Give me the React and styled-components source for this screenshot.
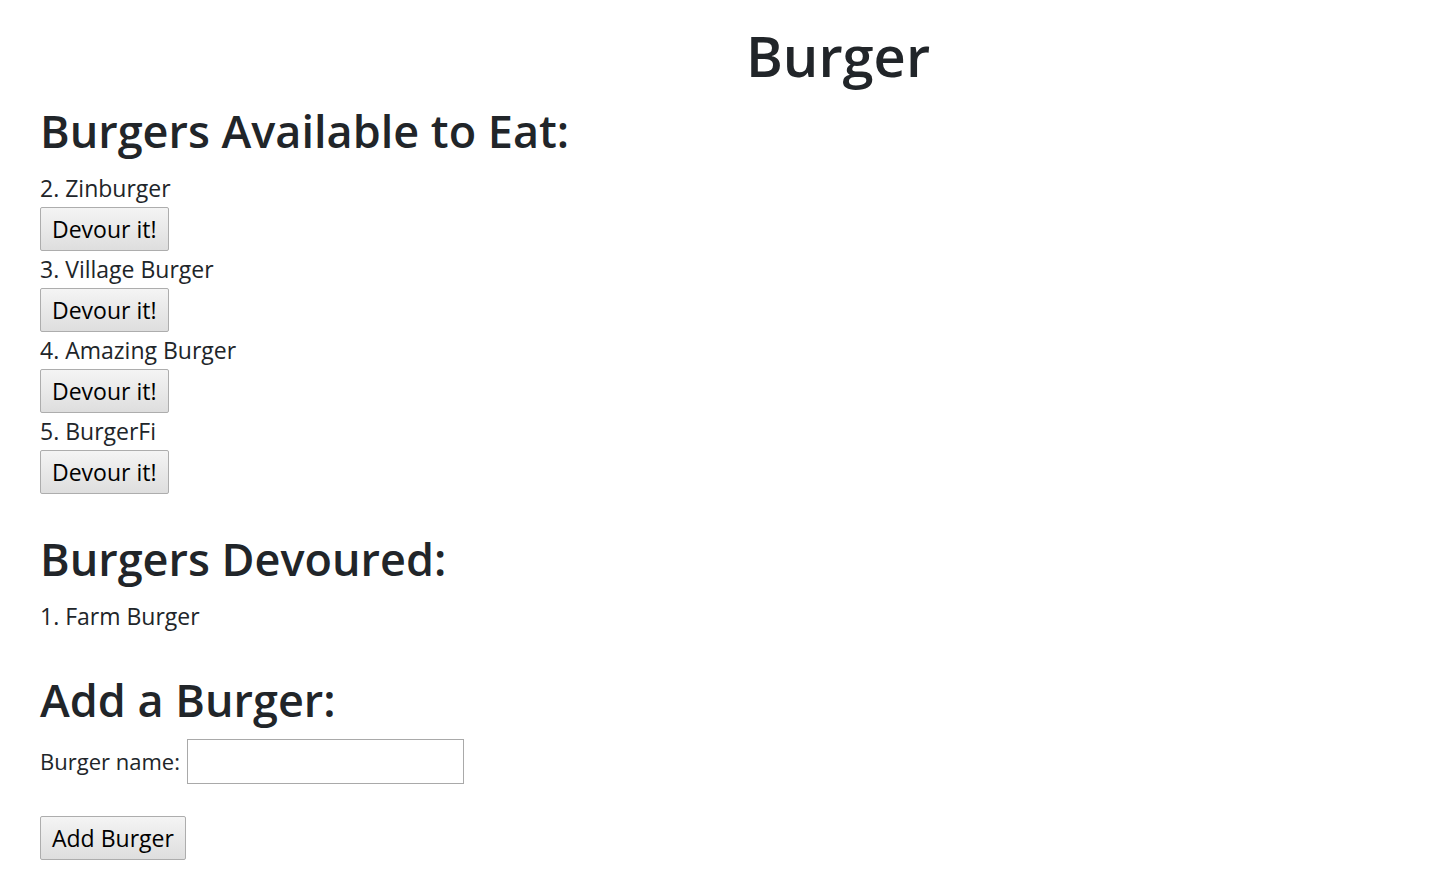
import styled, { createGlobalStyle } from "styled-components";

const GlobalStyle = createGlobalStyle`
  body {
    margin: 0;
    background: #fff;
    color: #212529;
    font-family: "Open Sans", "Noto Sans", sans-serif;
  }
`;

const Page = styled.div`
  padding: 0 40px 20px 40px;
`;

const Title = styled.h1`
  margin: 0;
  padding: 22px 0 0 234px;
  text-align: center;
  font-size: 56px;
  font-weight: 600;
  line-height: 1.2;
`;

const SectionTitle = styled.h2`
  margin: ${(p) => p.$top}px 0 12px 0;
  font-size: 45px;
  font-weight: 600;
  line-height: 1.2;
`;

const List = styled.div`
  display: flex;
  flex-direction: column;
  align-items: flex-start;
`;

const Item = styled.div`
  font-size: 23px;
  line-height: 37px;
`;

const Button = styled.button`
  display: block;
  font-family: inherit;
  font-size: 23px;
  line-height: 36px;
  color: #000;
  padding: 3px 11px;
  border: 1px solid #adadad;
  border-radius: 2px;
  background: linear-gradient(#f4f4f4, #dedede);
`;

const Form = styled.form`
  display: flex;
  flex-direction: column;
  align-items: flex-start;
  gap: 32px;
`;

const Field = styled.label`
  display: flex;
  align-items: center;
  gap: 7px;
  font-size: 22px;
  line-height: 37px;
`;

const Input = styled.input`
  width: 277px;
  height: 45px;
  box-sizing: border-box;
  border: 1px solid #a9a9a9;
  font-family: inherit;
  font-size: 23px;
`;

const burgers = [
  { id: 2, name: "Zinburger" },
  { id: 3, name: "Village Burger" },
  { id: 4, name: "Amazing Burger" },
  { id: 5, name: "BurgerFi" },
];

export default function App() {
  return (
    <Page>
      <GlobalStyle />
      <Title>Burger</Title>
      <SectionTitle $top={15}>Burgers Available to Eat:</SectionTitle>
      <List>
        {burgers.map((b) => (
          <div key={b.id}>
            <Item>
              {b.id}. {b.name}
            </Item>
            <Button type="button">Devour it!</Button>
          </div>
        ))}
      </List>
      <SectionTitle $top={38}>Burgers Devoured:</SectionTitle>
      <Item>1. Farm Burger</Item>
      <SectionTitle $top={38}>Add a Burger:</SectionTitle>
      <Form onSubmit={(e) => e.preventDefault()}>
        <Field>
          Burger name:
          <Input type="text" />
        </Field>
        <Button type="submit">Add Burger</Button>
      </Form>
    </Page>
  );
}
